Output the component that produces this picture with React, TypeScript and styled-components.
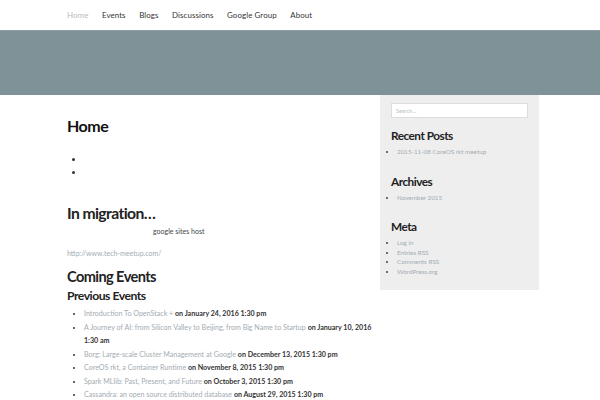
import styled, { createGlobalStyle } from 'styled-components';

const GlobalStyle = createGlobalStyle`
  html, body {
    margin: 0;
    padding: 0;
    background: #ffffff;
    font-family: Lato, "Noto Sans", sans-serif;
    color: #333;
  }
`;

const navItems = ['Home', 'Events', 'Blogs', 'Discussions', 'Google Group', 'About'];

const events = [
  { title: 'Introduction To OpenStack +', date: 'January 24, 2016 1:30 pm' },
  { title: 'A Journey of AI: from Silicon Valley to Beijing, from Big Name to Startup', date: 'January 10, 2016 1:30 am' },
  { title: 'Borg: Large-scale Cluster Management at Google', date: 'December 13, 2015 1:30 pm' },
  { title: 'CoreOS rkt, a Container Runtime', date: 'November 8, 2015 1:30 pm' },
  { title: 'Spark MLlib: Past, Present, and Future', date: 'October 3, 2015 1:30 pm' },
  { title: 'Cassandra: an open source distributed database', date: 'August 29, 2015 1:30 pm' },
];

export default function App() {
  return (
    <>
      <GlobalStyle />
      <NavBar>
        {navItems.map((item, i) => (
          <NavLink key={item} $active={i === 0}>{item}</NavLink>
        ))}
      </NavBar>
      <Banner />
      <Main>
        <Content>
          <PageTitle>Home</PageTitle>
          <EmptyList>
            <li />
            <li />
          </EmptyList>
          <SectionTitle>In migration…</SectionTitle>
          <Note>google sites host</Note>
          <UrlLine>http://www.tech-meetup.com/</UrlLine>
          <EventsTitle>Coming Events</EventsTitle>
          <SubTitle>Previous Events</SubTitle>
          <EventList>
            {events.map(ev => (
              <EventItem key={ev.title}>
                <EventLink>{ev.title}</EventLink> <strong>on {ev.date}</strong>
              </EventItem>
            ))}
          </EventList>
        </Content>
        <Sidebar>
          <SearchBox placeholder="Search..." />
          <WidgetTitle>Recent Posts</WidgetTitle>
          <WidgetList>
            <li><WidgetLink>2015-11-08 CoreOS rkt meetup</WidgetLink></li>
          </WidgetList>
          <WidgetTitle>Archives</WidgetTitle>
          <WidgetList>
            <li><WidgetLink>November 2015</WidgetLink></li>
          </WidgetList>
          <WidgetTitle>Meta</WidgetTitle>
          <WidgetList>
            <li><WidgetLink>Log in</WidgetLink></li>
            <li><WidgetLink>Entries RSS</WidgetLink></li>
            <li><WidgetLink>Comments RSS</WidgetLink></li>
            <li><WidgetLink>WordPress.org</WidgetLink></li>
          </WidgetList>
        </Sidebar>
      </Main>
    </>
  );
}

const NavBar = styled.nav`
  height: 30px;
  display: flex;
  align-items: center;
  gap: 13.5px;
  padding-left: 67px;
  background: #ffffff;
`;

const NavLink = styled.span<{ $active: boolean }>`
  font-size: 7.9px;
  letter-spacing: 0.1px;
  color: ${p => (p.$active ? '#b4bcc2' : '#333333')};
`;

const Banner = styled.div`
  height: 65px;
  background: #7f9297;
  border-top: 1px solid #8c9ea3;
  box-sizing: border-box;
`;

const Main = styled.div`
  display: flex;
  align-items: flex-start;
  gap: 8px;
  padding-left: 67px;
`;

const Content = styled.div`
  width: 305px;
  padding-top: 21px;
`;

const PageTitle = styled.h1`
  margin: 0;
  font-size: 16px;
  line-height: 20px;
  font-weight: 700;
  letter-spacing: -0.5px;
  color: #111;
`;

const EmptyList = styled.ul`
  margin: 17px 0 0;
  padding-left: 17px;
  list-style: disc;
  font-size: 8px;
  line-height: 13px;

  li {
    height: 13px;
  }
`;

const SectionTitle = styled.h2`
  margin: 24px 0 0;
  font-size: 15.7px;
  line-height: 20px;
  font-weight: 700;
  letter-spacing: -0.6px;
  color: #222;
`;

const Note = styled.p`
  margin: 2px 0 0;
  padding-left: 86px;
  font-size: 7px;
  line-height: 12px;
  color: #444;
`;

const UrlLine = styled.p`
  margin: 10px 0 0;
  font-size: 7px;
  line-height: 12px;
  color: #a3acb3;
`;

const EventsTitle = styled.h2`
  margin: 8px 0 0;
  font-size: 14.6px;
  line-height: 20px;
  font-weight: 700;
  letter-spacing: -0.6px;
  color: #222;
`;

const SubTitle = styled.h3`
  margin: 0;
  font-size: 12.2px;
  line-height: 17px;
  font-weight: 700;
  letter-spacing: -0.5px;
  color: #222;
`;

const EventList = styled.ul`
  margin: 3px 0 0;
  padding-left: 17px;
  list-style: disc;
  font-size: 7.1px;
  line-height: 13.5px;
  color: #333;

  strong {
    font-weight: 700;
  }
`;

const EventItem = styled.li`
  margin: 0;
`;

const EventLink = styled.span`
  color: #a3acb3;
`;

const Sidebar = styled.aside`
  width: 159px;
  box-sizing: border-box;
  background: #eeeeee;
  padding: 8px 11px 13px;
`;

const SearchBox = styled.input`
  display: block;
  width: 100%;
  height: 15px;
  box-sizing: border-box;
  border: 1px solid #dddddd;
  background: #ffffff;
  padding: 0 4px;
  font-family: Lato, sans-serif;
  font-size: 5.5px;
  outline: none;

  &::placeholder {
    color: #b8bec3;
  }
`;

const WidgetTitle = styled.h4`
  margin: 10px 0 0;
  font-size: 11.8px;
  line-height: 16px;
  font-weight: 700;
  letter-spacing: -0.5px;
  color: #222;

  & + ul {
    margin-top: 3px;
  }

  ul + & {
    margin-top: 17px;
  }
`;

const WidgetList = styled.ul`
  margin: 0;
  padding-left: 6px;
  list-style: disc;
  font-size: 6.3px;
  line-height: 9.6px;
  color: #444;
`;

const WidgetLink = styled.span`
  color: #a3acb3;
`;
